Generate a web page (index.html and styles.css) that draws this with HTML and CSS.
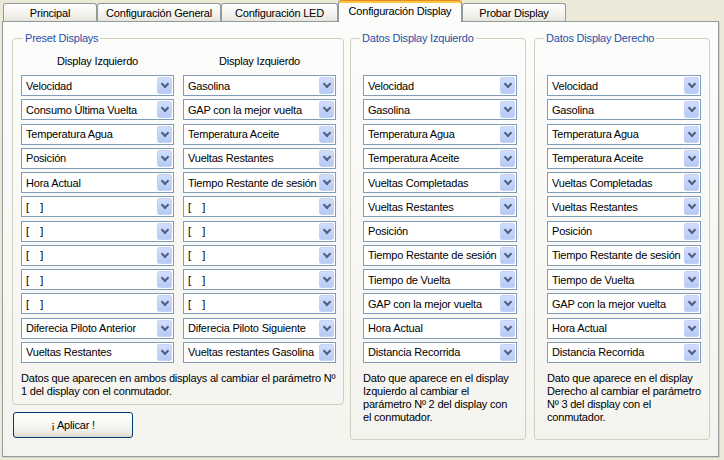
FILE: index.html
```html
<!DOCTYPE html>
<html>
<head>
    <title>Configuración Display</title>
    <link rel="stylesheet" href="styles.css">
</head>
<body>
    <div class="window">
        <div class="tabs">
            <div class="tab tab-principal">Principal</div>
            <div class="tab tab-general">Configuración General</div>
            <div class="tab tab-led">Configuración LED</div>
            <div class="tab tab-display active">Configuración Display</div>
            <div class="tab tab-probar">Probar Display</div>
        </div>

        <div class="page">
            <div class="preset-col">
                <fieldset class="group preset">
                    <legend>Preset Displays</legend>
                    <div class="heads">
                        <div class="col-head">Display Izquierdo</div>
                        <div class="col-head">Display Izquierdo</div>
                    </div>
                    <div class="combo-grid two">
                        <div class="combo"><span>Velocidad</span><i class="arrow"></i></div>
                        <div class="combo"><span>Gasolina</span><i class="arrow"></i></div>
                        <div class="combo"><span>Consumo Última Vuelta</span><i class="arrow"></i></div>
                        <div class="combo"><span>GAP con la mejor vuelta</span><i class="arrow"></i></div>
                        <div class="combo"><span>Temperatura Agua</span><i class="arrow"></i></div>
                        <div class="combo"><span>Temperatura Aceite</span><i class="arrow"></i></div>
                        <div class="combo"><span>Posición</span><i class="arrow"></i></div>
                        <div class="combo"><span>Vueltas Restantes</span><i class="arrow"></i></div>
                        <div class="combo"><span>Hora Actual</span><i class="arrow"></i></div>
                        <div class="combo"><span>Tiempo Restante de sesión</span><i class="arrow"></i></div>
                        <div class="combo"><span>[&nbsp;&nbsp;&nbsp;&nbsp;]</span><i class="arrow"></i></div>
                        <div class="combo"><span>[&nbsp;&nbsp;&nbsp;&nbsp;]</span><i class="arrow"></i></div>
                        <div class="combo"><span>[&nbsp;&nbsp;&nbsp;&nbsp;]</span><i class="arrow"></i></div>
                        <div class="combo"><span>[&nbsp;&nbsp;&nbsp;&nbsp;]</span><i class="arrow"></i></div>
                        <div class="combo"><span>[&nbsp;&nbsp;&nbsp;&nbsp;]</span><i class="arrow"></i></div>
                        <div class="combo"><span>[&nbsp;&nbsp;&nbsp;&nbsp;]</span><i class="arrow"></i></div>
                        <div class="combo"><span>[&nbsp;&nbsp;&nbsp;&nbsp;]</span><i class="arrow"></i></div>
                        <div class="combo"><span>[&nbsp;&nbsp;&nbsp;&nbsp;]</span><i class="arrow"></i></div>
                        <div class="combo"><span>[&nbsp;&nbsp;&nbsp;&nbsp;]</span><i class="arrow"></i></div>
                        <div class="combo"><span>[&nbsp;&nbsp;&nbsp;&nbsp;]</span><i class="arrow"></i></div>
                        <div class="combo"><span>Diferecia Piloto Anterior</span><i class="arrow"></i></div>
                        <div class="combo"><span>Diferecia Piloto Siguiente</span><i class="arrow"></i></div>
                        <div class="combo"><span>Vueltas Restantes</span><i class="arrow"></i></div>
                        <div class="combo"><span>Vueltas restantes Gasolina</span><i class="arrow"></i></div>
                    </div>
                    <p class="note">Datos que aparecen en ambos displays al cambiar el parámetro Nº<br>1 del display con el conmutador.</p>
                </fieldset>
                <button class="btn">¡ Aplicar !</button>
            </div>

            <fieldset class="group side">
                <legend>Datos Display Izquierdo</legend>
                <div class="combo-grid">
                    <div class="combo"><span>Velocidad</span><i class="arrow"></i></div>
                    <div class="combo"><span>Gasolina</span><i class="arrow"></i></div>
                    <div class="combo"><span>Temperatura Agua</span><i class="arrow"></i></div>
                    <div class="combo"><span>Temperatura Aceite</span><i class="arrow"></i></div>
                    <div class="combo"><span>Vueltas Completadas</span><i class="arrow"></i></div>
                    <div class="combo"><span>Vueltas Restantes</span><i class="arrow"></i></div>
                    <div class="combo"><span>Posición</span><i class="arrow"></i></div>
                    <div class="combo"><span>Tiempo Restante de sesión</span><i class="arrow"></i></div>
                    <div class="combo"><span>Tiempo de Vuelta</span><i class="arrow"></i></div>
                    <div class="combo"><span>GAP con la mejor vuelta</span><i class="arrow"></i></div>
                    <div class="combo"><span>Hora Actual</span><i class="arrow"></i></div>
                    <div class="combo"><span>Distancia Recorrida</span><i class="arrow"></i></div>
                </div>
                <p class="note">Dato que aparece en el display<br>Izquierdo al cambiar el<br>parámetro Nº 2 del display con<br>el conmutador.</p>
            </fieldset>

            <fieldset class="group side right">
                <legend>Datos Display Derecho</legend>
                <div class="combo-grid">
                    <div class="combo"><span>Velocidad</span><i class="arrow"></i></div>
                    <div class="combo"><span>Gasolina</span><i class="arrow"></i></div>
                    <div class="combo"><span>Temperatura Agua</span><i class="arrow"></i></div>
                    <div class="combo"><span>Temperatura Aceite</span><i class="arrow"></i></div>
                    <div class="combo"><span>Vueltas Completadas</span><i class="arrow"></i></div>
                    <div class="combo"><span>Vueltas Restantes</span><i class="arrow"></i></div>
                    <div class="combo"><span>Posición</span><i class="arrow"></i></div>
                    <div class="combo"><span>Tiempo Restante de sesión</span><i class="arrow"></i></div>
                    <div class="combo"><span>Tiempo de Vuelta</span><i class="arrow"></i></div>
                    <div class="combo"><span>GAP con la mejor vuelta</span><i class="arrow"></i></div>
                    <div class="combo"><span>Hora Actual</span><i class="arrow"></i></div>
                    <div class="combo"><span>Distancia Recorrida</span><i class="arrow"></i></div>
                </div>
                <p class="note">Dato que aparece en el display<br>Derecho al cambiar el parámetro<br>Nº 3 del display con el<br>conmutador.</p>
            </fieldset>
        </div>
    </div>
</body>
</html>
```

FILE: styles.css
```css
body {
    margin: 0;
    background: #ece9d8;
    font-family: "Liberation Sans", Arial, sans-serif;
    font-size: 11px;
    letter-spacing: -0.2px;
    color: #000;
    overflow: hidden;
}
.window {
    width: 724px;
    height: 460px;
}

/* tab strip */
.tabs {
    display: flex;
    align-items: flex-end;
    height: 21px;
    padding-left: 3px;
}
.tab {
    box-sizing: border-box;
    height: 18px;
    padding-top: 1px;
    line-height: 16px;
    text-align: center;
    border: 1px solid #919b9c;
    border-bottom: none;
    border-radius: 3px 3px 0 0;
    background: linear-gradient(#ffffff, #f3f2ee 60%, #e6e4dc);
    white-space: nowrap;
}
.tab-principal { width: 94px; }
.tab-general { width: 124px; }
.tab-led { width: 117px; }
.tab-display { width: 124px; }
.tab-probar { width: 104px; }
.tab.active {
    position: relative;
    z-index: 1;
    height: 22px;
    margin-bottom: -1px;
    line-height: 18px;
    border-top: 1px solid #e68b2c;
    box-shadow: inset 0 2px 0 #ffc73c;
    background: #fcfcfb;
}

/* tab page */
.page {
    box-sizing: border-box;
    display: flex;
    align-items: flex-start;
    width: 717px;
    height: 436px;
    margin-left: 2px;
    padding: 10px 0 0 9px;
    border: 1px solid #919b9c;
    background: linear-gradient(#fcfcfb, #f4f3ee);
    box-shadow: 1px 1px 0 #d5d2c4;
}

/* group boxes */
.group {
    box-sizing: border-box;
    min-width: 0;
    margin: 0;
    padding: 10px 8px 6px 8px;
    border: 1px solid #d0d0bf;
    border-radius: 4px;
}
.group legend {
    padding: 0 2px;
    margin-left: 2px;
    line-height: 13px;
    color: #1f50a8;
}
.preset {
    width: 332px;
}
.side {
    width: 176px;
    margin-left: 6px;
    padding: 30px 8px 15px 12px;
}
.side legend {
    margin-left: -3px;
}
.side.right {
    margin-left: 8px;
}

.heads {
    display: grid;
    grid-template-columns: 153px 153px;
    column-gap: 9px;
    margin-bottom: 7px;
}
.col-head {
    text-align: center;
    line-height: 13px;
}

.combo-grid {
    display: grid;
    grid-template-columns: 154px;
    grid-auto-rows: 21px;
    row-gap: 3.27px;
}
.combo-grid.two {
    grid-template-columns: 153px 153px;
    column-gap: 9px;
}
.combo {
    box-sizing: border-box;
    display: flex;
    align-items: center;
    border: 1px solid #7f9db9;
    background: #fff;
}
.combo span {
    flex: 1;
    padding-left: 4px;
    overflow: hidden;
    white-space: nowrap;
}
.arrow {
    box-sizing: border-box;
    display: flex;
    align-items: center;
    justify-content: center;
    width: 15px;
    height: 17px;
    margin: 0 1px;
    border: 1px solid #c4d3f6;
    border-radius: 2px;
    background: linear-gradient(#d2ddfb, #b6c9f5);
}
.arrow::after {
    content: "";
    width: 4px;
    height: 4px;
    margin-top: -3px;
    border-right: 2px solid #4d6185;
    border-bottom: 2px solid #4d6185;
    transform: rotate(45deg);
}

.note {
    margin: 9px 0 0 0;
    line-height: 13px;
    white-space: nowrap;
}

button.btn {
    display: block;
    width: 120px;
    height: 26px;
    margin: 7px 0 0 1px;
    border: 1px solid #003c74;
    border-radius: 3px;
    background: linear-gradient(#ffffff, #f2f1ec 70%, #dcd8cc);
    font-family: "Liberation Sans", Arial, sans-serif;
    font-size: 11px;
    letter-spacing: -0.2px;
    color: #000;
}
```
